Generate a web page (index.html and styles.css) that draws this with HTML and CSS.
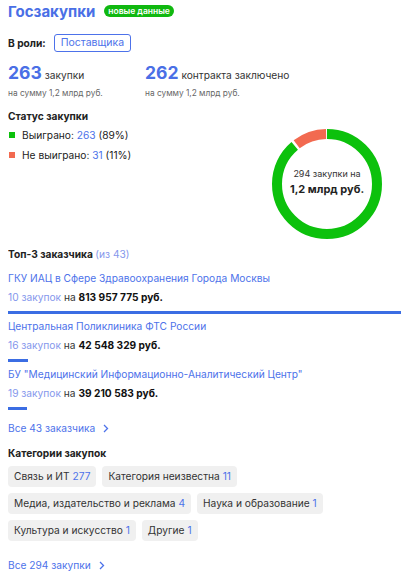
FILE: index.html
```html
<!DOCTYPE html>
<html lang="ru">
<head>
<meta charset="utf-8">
<link rel="stylesheet" href="styles.css">
</head>
<body>
<div class="page">
  <div class="header">
    <h1 class="title">Госзакупки</h1>
    <span class="badge">новые данные</span>
  </div>

  <div class="role">
    <span class="role-label">В роли:</span>
    <span class="role-btn">Поставщика</span>
  </div>

  <div class="stats">
    <div class="stat">
      <div class="stat-main"><span class="stat-num">263</span> <span class="stat-word">закупки</span></div>
      <div class="stat-sub">на сумму 1,2 млрд руб.</div>
    </div>
    <div class="stat">
      <div class="stat-main"><span class="stat-num">262</span> <span class="stat-word">контракта заключено</span></div>
      <div class="stat-sub">на сумму 1,2 млрд руб.</div>
    </div>
  </div>

  <div class="status">
    <div class="status-left">
      <div class="section-title">Статус закупки</div>
      <ul class="legend">
        <li><span class="sq sq-green"></span>Выиграно: <span class="link">263</span> (89%)</li>
        <li><span class="sq sq-red"></span>Не выиграно: <span class="link">31</span> (11%)</li>
      </ul>
    </div>
    <div class="donut">
      <svg width="110" height="110" viewBox="0 0 110 110">
        <circle cx="55" cy="55" r="50" fill="none" stroke="#0cc10c" stroke-width="10"
          stroke-dasharray="278.6 314.16" transform="rotate(-90 55 55)"/>
        <circle cx="55" cy="55" r="50" fill="none" stroke="#f26a50" stroke-width="10"
          stroke-dasharray="31.6 314.16" stroke-dashoffset="-281.1" transform="rotate(-90 55 55)"/>
      </svg>
      <div class="donut-text">
        <div class="donut-small">294 закупки на</div>
        <div class="donut-big">1,2 млрд руб.</div>
      </div>
    </div>
  </div>

  <div class="top">
    <div class="section-title">Топ-3 заказчика <span class="muted-link">(из 43)</span></div>
    <div class="customer">
      <div class="cust-name">ГКУ ИАЦ в Сфере Здравоохранения Города Москвы</div>
      <div class="cust-sum"><span class="muted-link">10 закупок</span> на <b>813 957 775 руб.</b></div>
      <div class="bar" style="width:100%"></div>
    </div>
    <div class="customer">
      <div class="cust-name">Центральная Поликлиника ФТС России</div>
      <div class="cust-sum"><span class="muted-link">16 закупок</span> на <b>42 548 329 руб.</b></div>
      <div class="bar" style="width:5.2%"></div>
    </div>
    <div class="customer">
      <div class="cust-name">БУ "Медицинский Информационно-Аналитический Центр"</div>
      <div class="cust-sum"><span class="muted-link">19 закупок</span> на <b>39 210 583 руб.</b></div>
      <div class="bar" style="width:4.8%"></div>
    </div>
    <div class="more">Все 43 заказчика
      <svg class="chev" width="6" height="9" viewBox="0 0 6 9"><path d="M1 1l3.5 3.5L1 8" fill="none" stroke="#4d72ea" stroke-width="1.3"/></svg>
    </div>
  </div>

  <div class="cats">
    <div class="section-title">Категории закупок</div>
    <div class="tags">
      <span class="tag">Связь и ИТ <span class="link">277</span></span>
      <span class="tag">Категория неизвестна <span class="link">11</span></span>
      <span class="tag">Медиа, издательство и реклама <span class="link">4</span></span>
      <span class="tag">Наука и образование <span class="link">1</span></span>
      <span class="tag">Культура и искусство <span class="link">1</span></span>
      <span class="tag">Другие <span class="link">1</span></span>
    </div>
    <div class="more more-last">Все 294 закупки
      <svg class="chev" width="6" height="9" viewBox="0 0 6 9"><path d="M1 1l3.5 3.5L1 8" fill="none" stroke="#4d72ea" stroke-width="1.3"/></svg>
    </div>
  </div>
</div>
</body>
</html>
```

FILE: styles.css
```css
* { box-sizing: border-box; }
body {
  margin: 1px 8px 8px;
  font-family: Inter, "Noto Sans", sans-serif;
  color: #222;
  background: #fff;
  font-size: 10.2px;
}
.page { width: 393px; }

.header { display: flex; align-items: center; gap: 9px; height: 20px; }
.title { margin: 0; font-size: 15px; font-weight: 700; color: #4a6fe6; line-height: 1; }
.badge {
  background: #10b810; color: #fff; font-size: 8.5px; font-weight: 600;
  border-radius: 6px; padding: 1px 4px; line-height: 10px;
}

.role { display: flex; align-items: center; gap: 8px; margin-top: 13px; }
.role-label { font-weight: 700; font-size: 10.2px; }
.role-btn {
  border: 1px solid #4d72ea; color: #4d72ea; border-radius: 3px;
  padding: 0 6px; height: 18px; line-height: 16px; font-size: 10.5px;
}

.stats { display: flex; margin-top: 10px; }
.stat { width: 137px; white-space: nowrap; }
.stat-main { display: flex; align-items: baseline; gap: 3px; }
.stat-num { font-size: 17.5px; font-weight: 700; color: #4a6fe6; line-height: 22px; }
.stat-word { font-size: 10.2px; color: #333; }
.stat-sub { font-size: 8.3px; color: #666; margin-top: 4px; }

.status { display: flex; justify-content: space-between; margin-top: 11px; padding-right: 19px; }
.section-title { font-weight: 700; font-size: 10.2px; line-height: 14px; }
.legend { list-style: none; margin: 5px 0 0; padding: 0; }
.legend li { display: flex; align-items: center; height: 14px; margin-bottom: 6px; white-space: pre; }
.sq { width: 6px; height: 6px; margin: 0 7px 0 1px; }
.sq-green { background: #0cc10c; }
.sq-red { background: #f26a50; }
.link { color: #4d72ea; }
.muted-link { color: #8597ec; font-weight: 400; }

.donut { position: relative; width: 110px; height: 110px; margin-top: 20px; }
.donut svg { display: block; }
.donut-text {
  position: absolute; inset: 0; display: flex; flex-direction: column;
  align-items: center; justify-content: center; padding-bottom: 5px;
}
.donut-small { font-size: 9px; color: #333; }
.donut-big { font-size: 11px; font-weight: 700; margin-top: 3px; }

.top { margin-top: 8px; }
.customer { margin-top: 5px; }
.section-title + .customer { margin-top: 10px; }
.cust-name { color: #4d72ea; line-height: 14px; }
.cust-sum { line-height: 14px; margin-top: 5px; color: #333; }
.cust-sum b { color: #111; }
.bar { height: 3px; background: #3b6de3; margin-top: 7px; }
.more { display: flex; align-items: center; gap: 8px; color: #4d72ea; margin-top: 12px; }
.chev { display: block; }

.cats { margin-top: 12px; }
.tags { display: flex; flex-wrap: wrap; gap: 6px; margin-top: 6px; }
.tag {
  background: #f0f0f0; border-radius: 4px; height: 21px; line-height: 21px;
  padding: 0 6px; color: #333;
}
.more-last { margin-top: 18px; }
```
